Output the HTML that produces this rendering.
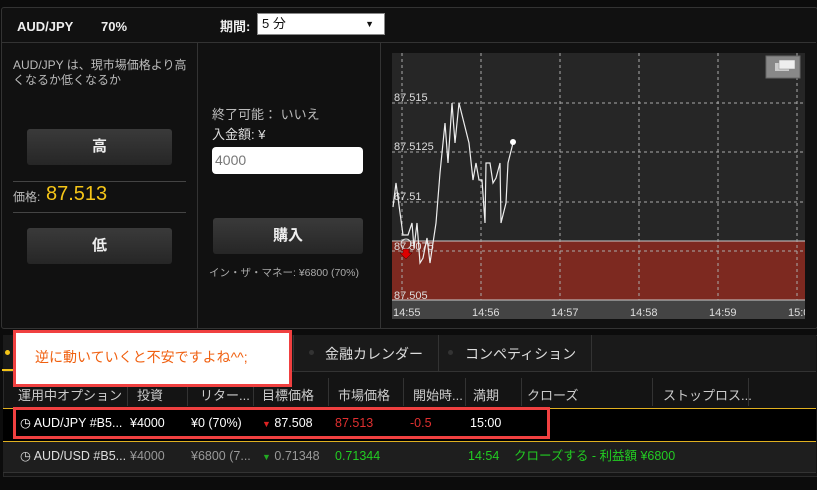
<!DOCTYPE html>
<html><head><meta charset="utf-8"><style>
body{margin:0;width:817px;height:490px;background:#0c0c0c;font-family:"Liberation Sans","Noto Sans CJK JP",sans-serif;color:#ddd;position:relative;overflow:hidden}
.a{position:absolute}
.btn{position:absolute;background:linear-gradient(#3a3a3a,#262626);border-radius:3px;color:#eee;font-weight:bold;font-size:15px;text-align:center}
.h{position:absolute;top:385px;font-size:13px;color:#ccc}
.sep{position:absolute;top:378px;width:1px;height:28px;background:#333}
.c{position:absolute;font-size:12.5px;line-height:15px}
</style></head><body>
<div class="a" style="left:1px;top:7px;width:815px;height:320px;background:#111;border:1px solid #333;border-radius:3px"></div>
<div class="a" style="left:2px;top:42px;width:814px;height:1px;background:#333"></div>
<div class="a" style="left:17px;top:19px;font-weight:bold;font-size:13px;color:#eee">AUD/JPY</div>
<div class="a" style="left:101px;top:19px;font-weight:bold;font-size:13px;color:#eee">70%</div>
<div class="a" style="left:220px;top:16px;font-weight:bold;font-size:13px;color:#eee">期間:</div>
<div class="a" style="left:257px;top:13px;width:128px;height:22px;background:#fff;border:1px solid #888;box-sizing:border-box;color:#111;font-size:13px;line-height:20px;padding-left:4px">5 分<span style="position:absolute;right:10px;top:0;font-size:9px">▼</span></div>
<div class="a" style="left:197px;top:43px;width:1px;height:285px;background:#333"></div>
<div class="a" style="left:380px;top:43px;width:1px;height:285px;background:#333"></div>
<div class="a" style="left:13px;top:58px;font-size:12px;color:#bbb;line-height:15px;width:180px">AUD/JPY は、現市場価格より高くなるか低くなるか</div>
<div class="btn" style="left:27px;top:129px;width:145px;height:36px;line-height:36px">高</div>
<div class="a" style="left:13px;top:181px;width:173px;height:1px;background:#444"></div>
<div class="a" style="left:13px;top:188px;font-size:12px;color:#bbb">価格:</div>
<div class="a" style="left:46px;top:183px;font-size:20px;color:#f5c518">87.513</div>
<div class="a" style="left:13px;top:212px;width:173px;height:1px;background:#444"></div>
<div class="btn" style="left:27px;top:228px;width:145px;height:36px;line-height:36px">低</div>
<div class="a" style="left:212px;top:104px;font-size:13px;color:#bbb">終了可能： いいえ</div>
<div class="a" style="left:212px;top:124px;font-size:13px;color:#ddd">入金額: ¥</div>
<div class="a" style="left:212px;top:147px;width:151px;height:27px;background:#fff;border-radius:4px;color:#777;font-size:14px;line-height:27px;padding-left:3px;box-sizing:border-box">4000</div>
<div class="btn" style="left:213px;top:218px;width:150px;height:36px;line-height:36px">購入</div>
<div class="a" style="left:209px;top:265px;font-size:10.5px;color:#aaa">イン・ザ・マネー: ¥6800 (70%)</div>
<svg class="a" style="left:392px;top:53px" width="413" height="266">
<rect width="413" height="266" fill="#262626"/>
<rect y="188" width="413" height="59" fill="#7d2920"/>
<line x1="0" y1="188" x2="413" y2="188" stroke="#ccc"/>
<rect y="247" width="413" height="19" fill="#444"/>
<line x1="0" y1="247" x2="413" y2="247" stroke="#ccc"/>
<g stroke="#aaa" stroke-dasharray="3,3" stroke-width="1">
<line x1="10" y1="0" x2="10" y2="247"/><line x1="89" y1="0" x2="89" y2="247"/><line x1="168" y1="0" x2="168" y2="247"/><line x1="247" y1="0" x2="247" y2="247"/><line x1="326" y1="0" x2="326" y2="247"/><line x1="405" y1="0" x2="405" y2="247"/>
<line x1="0" y1="50" x2="413" y2="50"/><line x1="0" y1="99" x2="413" y2="99"/><line x1="0" y1="149" x2="413" y2="149"/><line x1="0" y1="198" x2="413" y2="198"/>
</g>
<g fill="#ddd" font-size="11" font-family="Liberation Sans">
<text x="2" y="48">87.515</text><text x="2" y="97">87.5125</text><text x="2" y="147">87.51</text><text x="2" y="197">87.5075</text><text x="2" y="246">87.505</text>
<text x="1" y="263">14:55</text><text x="80" y="263">14:56</text><text x="159" y="263">14:57</text><text x="238" y="263">14:58</text><text x="317" y="263">14:59</text><text x="396" y="263">15:0</text>
</g>
<polyline fill="none" stroke="#eee" stroke-width="1.2" points="1,154 4,130 11,182 16,182 20,170 22,195 25,170 28,210 31,205 35,185 38,210 41,190 44,170 48,120 53,70 56,110 60,50 63,90 67,50 77,90 81,127 84,110 87,127 90,127 93,170 94,110 98,110 101,130 104,125 108,110 109,170 114,150 116,110 121,90"/>
<circle cx="121" cy="89" r="3" fill="#fff"/>
<circle cx="14" cy="191" r="5" fill="none" stroke="#ddd"/>
<path d="M11,196 h6 v4 h3 l-6,6 l-6,-6 h3z" fill="#d00" stroke="#400" stroke-width=".5"/>
<rect x="374" y="3" width="34" height="22" fill="#888" stroke="#666"/>
<rect x="383" y="10" width="14" height="8" fill="#ccc"/><rect x="387" y="7" width="16" height="9" fill="#eee" stroke="#888" stroke-width=".5"/>
</svg>
<div class="a" style="left:3px;top:335px;width:813px;height:140px;background:#141414;border:1px solid #2a2a2a"></div>
<div class="a" style="left:3px;top:335px;width:813px;height:36px;background:#1a1a1a;border-bottom:1px solid #333"></div>
<div class="a" style="left:2px;top:369px;width:12px;height:2px;background:#f5c518"></div>
<div class="a" style="left:5px;top:350px;width:5px;height:5px;border-radius:50%;background:#f5c518"></div>
<div class="a" style="left:293px;top:335px;width:1px;height:36px;background:#333"></div>
<div class="a" style="left:438px;top:335px;width:1px;height:36px;background:#333"></div>
<div class="a" style="left:591px;top:335px;width:1px;height:36px;background:#333"></div>
<div class="a" style="left:309px;top:350px;width:5px;height:5px;border-radius:50%;background:#333"></div>
<div class="a" style="left:325px;top:344px;font-size:14px;color:#ddd">金融カレンダー</div>
<div class="a" style="left:448px;top:350px;width:5px;height:5px;border-radius:50%;background:#333"></div>
<div class="a" style="left:465px;top:344px;font-size:14px;color:#ddd">コンペティション</div>
<div class="h" style="left:18px">運用中オプション</div><div class="sep" style="left:127px"></div>
<div class="h" style="left:137px">投資</div><div class="sep" style="left:187px"></div>
<div class="h" style="left:200px">リター...</div><div class="sep" style="left:253px"></div>
<div class="h" style="left:262px">目標価格</div><div class="sep" style="left:328px"></div>
<div class="h" style="left:338px">市場価格</div><div class="sep" style="left:403px"></div>
<div class="h" style="left:413px">開始時...</div><div class="sep" style="left:465px"></div>
<div class="h" style="left:473px">満期</div><div class="sep" style="left:521px"></div>
<div class="h" style="left:527px">クローズ</div><div class="sep" style="left:652px"></div>
<div class="h" style="left:663px">ストップロス...</div><div class="sep" style="left:748px"></div>
<div class="a" style="left:3px;top:408px;width:813px;height:1px;background:#e0b020"></div>
<div class="a" style="left:3px;top:409px;width:813px;height:32px;background:#000"></div>
<div class="a" style="left:3px;top:441px;width:813px;height:1px;background:#e0b020"></div>
<div class="a" style="left:3px;top:442px;width:813px;height:30px;background:#1e1e1e;border-bottom:1px solid #333"></div>
<div class="c" style="left:20px;top:416px;color:#fff">◷ AUD/JPY #B5...</div>
<div class="c" style="left:130px;top:416px;color:#fff">¥4000</div>
<div class="c" style="left:191px;top:416px;color:#fff">¥0 (70%)</div>
<div class="c" style="left:262px;top:416px;color:#fff"><span style="color:#d22;font-size:9px">▼</span> 87.508</div>
<div class="c" style="left:335px;top:416px;color:#e03030">87.513</div>
<div class="c" style="left:410px;top:416px;color:#e03030">-0.5</div>
<div class="c" style="left:470px;top:416px;color:#fff">15:00</div>
<div class="c" style="left:20px;top:449px;color:#ddd">◷ AUD/USD #B5...</div>
<div class="c" style="left:130px;top:449px;color:#999">¥4000</div>
<div class="c" style="left:191px;top:449px;color:#999">¥6800 (7...</div>
<div class="c" style="left:262px;top:449px;color:#999"><span style="color:#2a2;font-size:9px">▼</span> 0.71348</div>
<div class="c" style="left:335px;top:449px;color:#2c2">0.71344</div>
<div class="c" style="left:468px;top:449px;color:#2c2">14:54</div>
<div class="c" style="left:514px;top:449px;color:#2c2">クローズする - 利益額 ¥6800</div>
<div class="a" style="left:13px;top:407px;width:537px;height:32px;border:3px solid #f04040;box-sizing:border-box"></div>
<div class="a" style="left:13px;top:330px;width:279px;height:57px;background:#fff;border:3px solid #f04040;box-sizing:border-box"></div>
<div class="a" style="left:35px;top:347px;font-size:14px;color:#f06010">逆に動いていくと不安ですよね^^;</div>
</body></html>
